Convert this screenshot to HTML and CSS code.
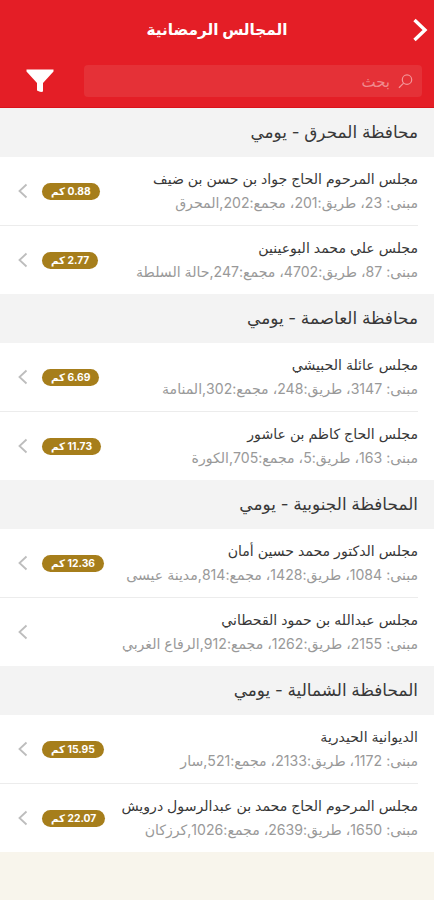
FILE: index.html
```html
<!DOCTYPE html>
<html lang="ar" dir="rtl">
<head>
<meta charset="utf-8">
<meta name="viewport" content="width=device-width">
<title>المجالس الرمضانية</title>
<link rel="stylesheet" href="styles.css">
</head>
<body>
<header class="top">
  <div class="nav">
    <svg class="back" viewBox="0 0 16 24"><path d="M2.5 2l10.5 10L2.5 22"/></svg>
    <h1>المجالس الرمضانية</h1>
  </div>
  <div class="tools">
    <div class="search"><svg class="lens" viewBox="0 0 16 16"><circle cx="9.6" cy="6" r="5"/><path d="M6 9.7L1 14.7"/></svg><span>بحث</span></div>
    <svg class="filter" viewBox="0 0 28 24"><path d="M0.5 0.5h27v2L17 14v8.6q-2.5 1-6-1V14L0.5 2.5z"/></svg>
  </div>
</header>
<main id="list"></main>
<script src="app.js"></script>
</body>
</html>
```
FILE: styles.css
```css
* { box-sizing: border-box; }
body { margin: 0; height: 900px; overflow: hidden; background: #f8f5ec; font-family: Inter, "DejaVu Sans", sans-serif; }
.top { height: 108px; background: #e41e26; border-bottom: 1px solid #d9131b; color: #fff; }
.nav { height: 59px; display: grid; grid-template-columns: 32px 1fr 32px; align-items: center; padding: 0 4px; }
.back { width: 16px; height: 24px; fill: none; stroke: #fff; stroke-width: 3.4; justify-self: start; margin-right: 2px; }
h1 { margin: 0; text-align: center; font-size: 15.3px; line-height: 24px; font-weight: 700; white-space: nowrap; }
.tools { display: flex; align-items: center; padding: 6px 12px 0 26px; justify-content: space-between; }
.search { width: 338px; height: 32px; border-radius: 4px; background: #e53137; display: flex; align-items: center; gap: 8px; padding-right: 9px; color: #f08a8e; font-size: 15px; }
.lens { width: 15px; height: 15px; fill: none; stroke: #f39598; stroke-width: 1.3; }
.filter { width: 28px; height: 24px; fill: #fff; }
.group { height: 186px; display: flex; flex-direction: column; background: #fff; }
h2 { margin: 0; flex: 0 0 49px; background: #f3f3f3; color: #383838; font-size: 16.9px; line-height: 49px; font-weight: 400; padding-right: 16px; white-space: nowrap; }
.row { flex: 1; display: flex; align-items: center; justify-content: space-between; margin-right: 16px; padding-left: 17px; }
.row + .row { border-top: 1px solid #ececec; }
.text { white-space: nowrap; }
.name { color: #383838; font-size: 14.1px; line-height: 24px; }
.address { color: #999; font-size: 14.1px; line-height: 24px; }
.side { display: flex; align-items: center; gap: 14px; }
.badge { height: 17px; border-radius: 9px; background: #a67e1b; color: #fff; font-size: 10.3px; line-height: 17px; font-weight: 700; padding: 0 9px; white-space: nowrap; }
.chevron { width: 11px; height: 16px; fill: none; stroke: #bdbdbd; stroke-width: 1.8; }
```
FILE: app.js
```js
const groups = [
  ["محافظة المحرق - يومي", [
    ["مجلس المرحوم الحاج جواد بن حسن بن ضيف", "مبنى: 23، طريق:201، مجمع:202,المحرق", "0.88"],
    ["مجلس علي محمد البوعينين", "مبنى: 87، طريق:4702، مجمع:247,حالة السلطة", "2.77"]]],
  ["محافظة العاصمة - يومي", [
    ["مجلس عائلة الحبيشي", "مبنى: 3147، طريق:248، مجمع:302,المنامة", "6.69"],
    ["مجلس الحاج كاظم بن عاشور", "مبنى: 163، طريق:5، مجمع:705,الكورة", "11.73"]]],
  ["المحافظة الجنوبية - يومي", [
    ["مجلس الدكتور محمد حسين أمان", "مبنى: 1084، طريق:1428، مجمع:814,مدينة عيسى", "12.36"],
    ["مجلس عبدالله بن حمود القحطاني", "مبنى: 2155، طريق:1262، مجمع:912,الرفاع الغربي", ""]]],
  ["المحافظة الشمالية - يومي", [
    ["الديوانية الحيدرية", "مبنى: 1172، طريق:2133، مجمع:521,سار", "15.95"],
    ["مجلس المرحوم الحاج محمد بن عبدالرسول درويش", "مبنى: 1650، طريق:2639، مجمع:1026,كرزكان", "22.07"]]]
];
document.getElementById("list").innerHTML = groups.map(([title, rows]) =>
  `<section class="group"><h2>${title}</h2>${rows.map(([name, address, km]) =>
    `<div class="row"><div class="text"><div class="name">${name}</div><div class="address">${address}</div></div>
    <div class="side">${km ? `<span class="badge">${km} كم</span>` : ""}<svg class="chevron" viewBox="0 0 11 16"><path d="M9.5 1.5L2.5 8L9.5 14.5"/></svg></div></div>`).join("")}</section>`).join("");
```
